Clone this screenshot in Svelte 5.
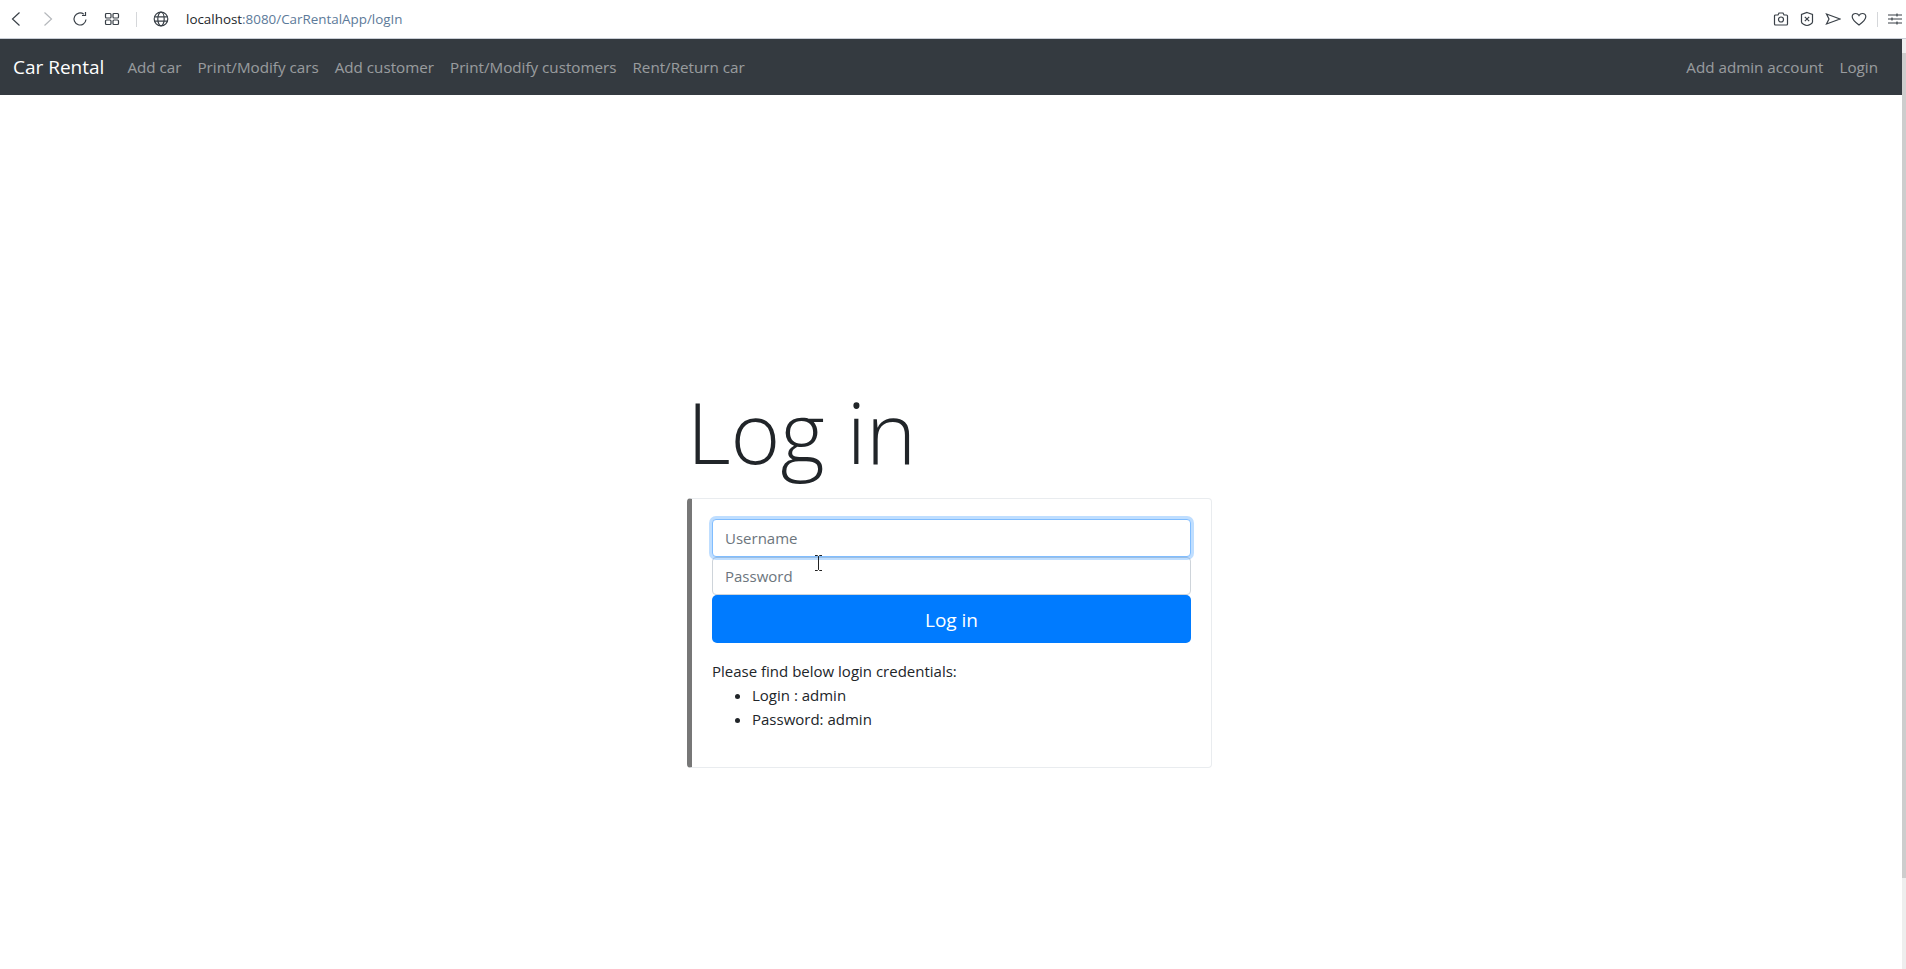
<script>
	const navLinks = ['Add car', 'Print/Modify cars', 'Add customer', 'Print/Modify customers', 'Rent/Return car'];
	const accountLinks = ['Add admin account', 'Login'];
</script>

<div class="browser-bar">
	<svg class="tool" width="16" height="16" viewBox="0 0 16 16"><path d="M11.500 1.500 4.500 8l7 6.500" /></svg>
	<svg class="tool faded" width="16" height="16" viewBox="0 0 16 16"><path d="M4.500 1.500 11.500 8l-7 6.500" /></svg>
	<svg class="tool" width="16" height="16" viewBox="0 0 16 16"><path d="M14 8.500A6 6 0 1 1 11.800 3.300M13.500 1v3.500H10" /></svg>
	<svg class="tool" width="16" height="16" viewBox="0 0 16 16">
		<rect x="1.500" y="2.500" width="5.500" height="4.500" rx="1" /><rect x="9" y="2.500" width="5.500" height="4.500" rx="1" />
		<rect x="1.500" y="9" width="5.500" height="4.500" rx="1" /><rect x="9" y="9" width="5.500" height="4.500" rx="1" />
	</svg>
	<span class="sep"></span>
	<svg class="tool globe" width="16" height="16" viewBox="0 0 16 16">
		<circle cx="8" cy="8" r="6.800" /><ellipse cx="8" cy="8" rx="3.200" ry="6.800" /><path d="M1.500 5.800h13M1.500 10.200h13" />
	</svg>
	<span class="url">localhost<span class="url-rest">:8080/CarRentalApp/logIn</span></span>
	<div class="bar-right">
		<svg class="tool" width="16" height="16" viewBox="0 0 16 16">
			<path d="M2.500 4H5l1-2h4l1 2h2.500a1 1 0 0 1 1 1v8a1 1 0 0 1-1 1h-11a1 1 0 0 1-1-1V5a1 1 0 0 1 1-1z" /><circle cx="8" cy="8.500" r="2.500" />
		</svg>
		<svg class="tool" width="16" height="16" viewBox="0 0 16 16">
			<path d="M8 1.500 13.500 3.500V11c0 1.500-3.500 3.500-5.500 3.500S2.500 12.500 2.500 11V3.500z" /><path d="m5.800 5.800 4.400 4.400M10.200 5.800l-4.400 4.400" />
		</svg>
		<svg class="tool" width="16" height="16" viewBox="0 0 16 16"><path d="M1.500 3 15 8 1.500 13 4 8z" /></svg>
		<svg class="tool" width="16" height="16" viewBox="0 0 16 16">
			<path d="M8 14C4 11 1.200 8.500 1.200 5.700 1.200 3.600 2.800 2.500 4.600 2.500 6 2.500 7.300 3.200 8 4.500 8.700 3.200 10 2.500 11.400 2.500 13.200 2.500 14.800 3.600 14.800 5.700 14.800 8.500 12 11 8 14z" />
		</svg>
		<span class="sep"></span>
		<svg class="tool" width="14" height="14" viewBox="0 0 14 14"><path d="M0 3h14M0 7h14M0 11h14M9 1.500v3M4 5.500v3M9 9.500v3" /></svg>
	</div>
</div>

<div class="viewport">
	<div class="content">
		<nav class="navbar">
			<a class="brand" href="#home">Car Rental</a>
			<ul class="nav-list">
				{#each navLinks as link}
					<li><a href="#{link}">{link}</a></li>
				{/each}
			</ul>
			<ul class="nav-list right">
				{#each accountLinks as link}
					<li><a href="#{link}">{link}</a></li>
				{/each}
			</ul>
		</nav>

		<main class="page">
			<h1>Log in</h1>
			<section class="card">
				<input class="field first" placeholder="Username" />
				<input class="field" placeholder="Password" type="password" />
				<button>Log in</button>
				<p>Please find below login credentials:</p>
				<ul class="creds">
					<li>Login : admin</li>
					<li>Password: admin</li>
				</ul>
				<svg class="cursor" width="9" height="16" viewBox="0 0 9 16"><path d="M1 .500h2.500L4.500 1.500 5.500.500H8M4.500 1.500v13M1 15.500h2.500l1-1 1 1H8" /></svg>
			</section>
		</main>
	</div>
	<div class="scrollbar"><span class="thumb"></span></div>
</div>

<style>
	:global(body) {
		margin: 0;
		background: #fff;
		font-family: 'Open Sans', 'Noto Sans', sans-serif;
		color: #212529;
		overflow: hidden;
	}

	.browser-bar {
		height: 39px;
		display: flex;
		align-items: center;
		padding-left: 8px;
		gap: 16px;
		border-bottom: 1px solid #c9ced6;
		box-sizing: border-box;
	}

	.tool {
		fill: none;
		stroke: #3a4148;
		stroke-width: 1.2;
	}

	.faded {
		stroke: #b5b8bc;
	}

	.sep {
		width: 1px;
		height: 15px;
		background: #d5d7da;
	}

	.url {
		font-size: 13.4px;
		color: #23272b;
		margin-left: 1px;
	}

	.url-rest {
		color: #5c7a99;
	}

	.bar-right {
		margin-left: auto;
		display: flex;
		align-items: center;
		gap: 10px;
		padding-right: 4px;
	}

	.viewport {
		display: flex;
		height: 930px;
	}

	.content {
		flex: 1;
	}

	.scrollbar {
		width: 4px;
		background: #eee;
		padding-top: 14px;
		box-sizing: border-box;
	}

	.thumb {
		display: block;
		height: 825px;
		background: #cdcdcd;
	}

	.navbar {
		height: 56px;
		display: flex;
		align-items: center;
		background: #343a40;
		padding: 0 13px;
		font-size: 15.2px;
	}

	.navbar a {
		text-decoration: none;
		color: rgba(255, 255, 255, 0.5);
	}

	.navbar .brand {
		color: #fff;
		font-size: 19px;
		margin-right: 23px;
	}

	.nav-list {
		display: flex;
		gap: 16px;
		list-style: none;
		margin: 0;
		padding: 0;
	}

	.right {
		margin-left: auto;
		padding-right: 11px;
	}

	.page {
		width: 525px;
		margin: 0 auto;
		padding: 285px 3px 0 0;
	}

	h1 {
		font-size: 85px;
		font-weight: 300;
		line-height: 1.2;
		margin: 0 0 16px;
	}

	.card {
		position: relative;
		border: 1px solid #e9ecef;
		border-left: 5px solid #777;
		border-radius: 4px;
		padding: 20px;
		box-sizing: border-box;
		height: 270px;
		display: flex;
		flex-direction: column;
		font-size: 15px;
	}

	.field {
		height: 38px;
		box-sizing: border-box;
		border: 1px solid #ced4da;
		border-radius: 4px;
		padding: 0 12px;
		font: inherit;
		font-size: 15px;
		outline: none;
	}

	.field::placeholder {
		color: #6c757d;
	}

	.first {
		border-color: #80bdff;
		box-shadow: 0 0 0 3px rgba(0, 123, 255, 0.25);
		position: relative;
		z-index: 1;
	}

	button {
		height: 48px;
		background: #007bff;
		color: #fff;
		border: none;
		border-radius: 5px;
		padding: 1px 0 0;
		font: inherit;
		font-size: 19px;
	}

	p {
		margin: 16px 0 0;
		line-height: 24px;
	}

	.creds {
		margin: 0;
		padding-left: 40px;
		line-height: 24px;
	}

	.cursor {
		position: absolute;
		left: 122px;
		top: 56px;
		z-index: 2;
		fill: none;
		stroke: #222;
		stroke-width: 1;
	}
</style>
